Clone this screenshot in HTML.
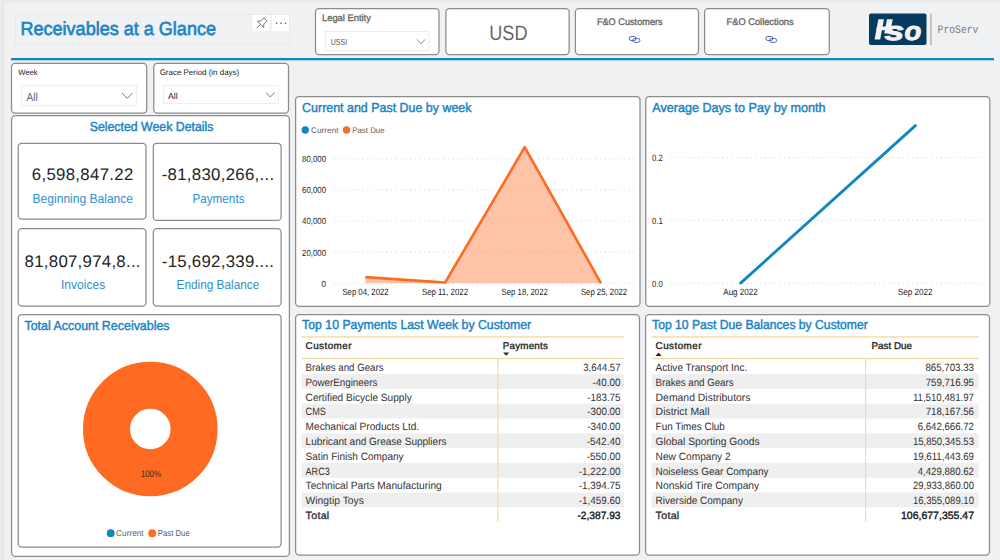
<!DOCTYPE html>
<html><head><meta charset="utf-8"><style>
html,body{margin:0;padding:0;width:1000px;height:560px;overflow:hidden;background:#F0F1F3;}
svg{display:block;}
</style></head><body>
<svg width="1000" height="560" viewBox="0 0 1000 560" text-rendering="geometricPrecision">
<rect x="0" y="0" width="1000" height="560" rx="0" fill="#F0F1F3" stroke="none" stroke-width="1" />
<rect x="0" y="0" width="1000" height="2" rx="0" fill="#E9E9E9" stroke="none" stroke-width="1" />
<rect x="0" y="0" width="2" height="560" rx="0" fill="#EDEDED" stroke="none" stroke-width="1" />
<rect x="2" y="0" width="2" height="560" rx="0" fill="#E6E6E6" stroke="none" stroke-width="1" />
<rect x="15.5" y="14.5" width="274.0" height="30.0" rx="0" fill="#F0F1F3" stroke="#E8E9EB" stroke-width="1" />
<text x="20.50" y="34.80" font-family="Liberation Sans" font-weight="normal" font-style="normal" font-size="18.84" fill="#1B84C5" stroke="#1B84C5" stroke-width="0.65" textLength="195.49" lengthAdjust="spacingAndGlyphs">Receivables at a Glance</text>
<rect x="252.5" y="15" width="17.0" height="16" rx="0" fill="#fff" stroke="none" stroke-width="1" />
<rect x="272" y="15" width="17" height="16" rx="0" fill="#fff" stroke="none" stroke-width="1" />
<g transform="translate(260.6,24.2) rotate(45) scale(0.95)" stroke="#707070" stroke-width="0.95" fill="none" stroke-linejoin="round"><path d="M-2.3,-7.2 L2.3,-7.2 L2.3,-2.6 L4.6,0.2 L-4.6,0.2 L-2.3,-2.6 Z"/><path d="M0,0.2 L0,6.2"/></g>
<circle cx="276.5" cy="23.3" r="0.8" fill="#555"/>
<circle cx="281" cy="23.3" r="0.8" fill="#555"/>
<circle cx="285.4" cy="23.3" r="0.8" fill="#555"/>
<rect x="315.5" y="8.6" width="123.5" height="46.0" rx="3.5" fill="#fff" stroke="#8C8C8C" stroke-width="1.25" />
<rect x="445.9" y="8.6" width="123.20000000000005" height="46.0" rx="3.5" fill="#fff" stroke="#8C8C8C" stroke-width="1.25" />
<rect x="575.4" y="8.6" width="123.10000000000002" height="46.0" rx="3.5" fill="#fff" stroke="#8C8C8C" stroke-width="1.25" />
<rect x="704.6" y="8.6" width="124.69999999999993" height="46.0" rx="3.5" fill="#fff" stroke="#8C8C8C" stroke-width="1.25" />
<text x="322.00" y="21.40" font-family="Liberation Sans" font-weight="normal" font-style="normal" font-size="9.57" fill="#666" stroke="#666" stroke-width="0.33" textLength="48.91" lengthAdjust="spacingAndGlyphs">Legal Entity</text>
<rect x="325.5" y="31.5" width="103.5" height="19.0" rx="0" fill="#fff" stroke="#ECECEC" stroke-width="1" />
<text x="330.70" y="45.20" font-family="Liberation Sans" font-weight="normal" font-style="normal" font-size="8.70" fill="#555" textLength="16.39" lengthAdjust="spacingAndGlyphs">USSI</text>
<path d="M417,39.5 L421,43.8 L425,39.5" fill="none" stroke="#777" stroke-width="0.9"/>
<text x="489.30" y="39.70" font-family="Liberation Sans" font-weight="normal" font-style="normal" font-size="20.87" fill="#666" textLength="38.23" lengthAdjust="spacingAndGlyphs">USD</text>
<text x="596.90" y="24.90" font-family="Liberation Sans" font-weight="normal" font-style="normal" font-size="9.57" fill="#666" stroke="#666" stroke-width="0.33" textLength="65.78" lengthAdjust="spacingAndGlyphs">F&amp;O Customers</text>
<text x="726.60" y="24.90" font-family="Liberation Sans" font-weight="normal" font-style="normal" font-size="9.57" fill="#666" stroke="#666" stroke-width="0.33" textLength="67.00" lengthAdjust="spacingAndGlyphs">F&amp;O Collections</text>
<g fill="none" stroke="#5A64B8" stroke-width="1"><rect x="629.1" y="36.5" width="7" height="4" rx="2"/><rect x="632.9" y="38.4" width="7" height="4" rx="2"/></g>
<g fill="none" stroke="#5A64B8" stroke-width="1"><rect x="765.8" y="36.5" width="7" height="4" rx="2"/><rect x="769.5999999999999" y="38.4" width="7" height="4" rx="2"/></g>
<rect x="869" y="13.5" width="57.5" height="31.5" rx="2" fill="#063B5F" stroke="none" stroke-width="1" />
<g transform="translate(874.6,39.4) skewX(-10.5)" fill="#F2F3F4"><rect x="0" y="-20.2" width="5.6" height="20.2"/><rect x="8.6" y="-20.2" width="5.8" height="14.2"/><rect x="0" y="-13.0" width="14" height="3.9"/></g>
<text x="884.60" y="39.60" font-family="Liberation Sans" font-weight="bold" font-style="italic" font-size="26.00" fill="#F2F3F4" stroke="#F2F3F4" stroke-width="0.9" textLength="19.64" lengthAdjust="spacingAndGlyphs">s</text>
<text x="904.40" y="39.60" font-family="Liberation Sans" font-weight="bold" font-style="italic" font-size="26.00" fill="#F2F3F4" stroke="#F2F3F4" stroke-width="0.9" textLength="16.82" lengthAdjust="spacingAndGlyphs">o</text>
<rect x="930.5" y="13.5" width="1.0" height="31.5" rx="0" fill="#9A9A9A" stroke="none" stroke-width="1" />
<text x="937.60" y="32.80" font-family="Liberation Mono" font-weight="normal" font-style="normal" font-size="11.59" fill="#7A7A7A" textLength="40.81" lengthAdjust="spacingAndGlyphs">ProServ</text>
<rect x="11" y="58" width="983" height="2.299999999999997" rx="0" fill="#1584C6" stroke="none" stroke-width="1" />
<rect x="11.5" y="63.4" width="135.2" height="49.699999999999996" rx="3.5" fill="#fff" stroke="#8C8C8C" stroke-width="1.25" />
<rect x="153.8" y="63.4" width="134.7" height="49.699999999999996" rx="3.5" fill="#fff" stroke="#8C8C8C" stroke-width="1.25" />
<text x="18.20" y="74.80" font-family="Liberation Sans" font-weight="normal" font-style="normal" font-size="8.12" fill="#252423" textLength="19.45" lengthAdjust="spacingAndGlyphs">Week</text>
<rect x="21.5" y="85.5" width="115.0" height="20.0" rx="0" fill="#fff" stroke="#EEEEEE" stroke-width="1" />
<text x="26.40" y="100.70" font-family="Liberation Sans" font-weight="normal" font-style="normal" font-size="11.59" fill="#666" textLength="11.31" lengthAdjust="spacingAndGlyphs">All</text>
<path d="M122,93 L127.2,98.4 L132.4,93" fill="none" stroke="#777" stroke-width="1"/>
<text x="159.70" y="74.80" font-family="Liberation Sans" font-weight="normal" font-style="normal" font-size="8.12" fill="#252423" textLength="79.49" lengthAdjust="spacingAndGlyphs">Grace Period (in days)</text>
<rect x="163.5" y="85.5" width="115.0" height="18.0" rx="0" fill="#fff" stroke="#EEEEEE" stroke-width="1" />
<text x="168.00" y="98.80" font-family="Liberation Sans" font-weight="normal" font-style="normal" font-size="8.70" fill="#252423" textLength="9.74" lengthAdjust="spacing">All</text>
<path d="M266,92.6 L270.3,97 L274.6,92.6" fill="none" stroke="#777" stroke-width="1"/>
<rect x="11.6" y="115.6" width="277.79999999999995" height="440.79999999999995" rx="4" fill="#fff" stroke="#8C8C8C" stroke-width="1.25" />
<text x="89.70" y="130.70" font-family="Liberation Sans" font-weight="normal" font-style="normal" font-size="13.04" fill="#1B84C5" stroke="#1B84C5" stroke-width="0.45" textLength="123.73" lengthAdjust="spacingAndGlyphs">Selected Week Details</text>
<rect x="18.25" y="143.25" width="127.75" height="75.85" rx="3.5" fill="#fff" stroke="#8C8C8C" stroke-width="1.25" />
<rect x="153.3" y="143.25" width="127.80000000000001" height="77.15" rx="3.5" fill="#fff" stroke="#8C8C8C" stroke-width="1.25" />
<rect x="18.25" y="228.6" width="127.75" height="77.4" rx="3.5" fill="#fff" stroke="#8C8C8C" stroke-width="1.25" />
<rect x="153.3" y="228.6" width="127.80000000000001" height="77.4" rx="3.5" fill="#fff" stroke="#8C8C8C" stroke-width="1.25" />
<text x="31.80" y="179.60" font-family="Liberation Sans" font-weight="normal" font-style="normal" font-size="16.81" fill="#252423" textLength="101.46" lengthAdjust="spacing">6,598,847.22</text>
<text x="32.60" y="203.20" font-family="Liberation Sans" font-weight="normal" font-style="normal" font-size="13.04" fill="#3090CC" textLength="100.40" lengthAdjust="spacingAndGlyphs">Beginning Balance</text>
<text x="161.70" y="180.20" font-family="Liberation Sans" font-weight="normal" font-style="normal" font-size="16.81" fill="#252423" textLength="112.35" lengthAdjust="spacing">-81,830,266,...</text>
<text x="192.40" y="202.60" font-family="Liberation Sans" font-weight="normal" font-style="normal" font-size="13.04" fill="#3090CC" textLength="52.12" lengthAdjust="spacingAndGlyphs">Payments</text>
<text x="24.60" y="266.80" font-family="Liberation Sans" font-weight="normal" font-style="normal" font-size="16.81" fill="#252423" textLength="115.89" lengthAdjust="spacing">81,807,974,8...</text>
<text x="61.00" y="289.20" font-family="Liberation Sans" font-weight="normal" font-style="normal" font-size="13.04" fill="#3090CC" textLength="44.18" lengthAdjust="spacingAndGlyphs">Invoices</text>
<text x="161.80" y="266.80" font-family="Liberation Sans" font-weight="normal" font-style="normal" font-size="16.81" fill="#252423" textLength="112.24" lengthAdjust="spacing">-15,692,339....</text>
<text x="176.60" y="289.20" font-family="Liberation Sans" font-weight="normal" font-style="normal" font-size="13.04" fill="#3090CC" textLength="82.61" lengthAdjust="spacingAndGlyphs">Ending Balance</text>
<rect x="18.25" y="314.5" width="262.85" height="232.5" rx="3.5" fill="#fff" stroke="#8C8C8C" stroke-width="1.25" />
<text x="24.50" y="330.00" font-family="Liberation Sans" font-weight="normal" font-style="normal" font-size="13.04" fill="#1B84C5" stroke="#1B84C5" stroke-width="0.45" textLength="145.08" lengthAdjust="spacingAndGlyphs">Total Account Receivables</text>
<circle cx="150.3" cy="429" r="43.8" fill="none" stroke="#FF6A22" stroke-width="47"/>
<text x="140.90" y="477.10" font-family="Liberation Sans" font-weight="normal" font-style="normal" font-size="9.42" fill="#3a2a20" textLength="19.98" lengthAdjust="spacingAndGlyphs">100%</text>
<circle cx="110.7" cy="533.2" r="3.9" fill="#1184C3"/>
<circle cx="152.2" cy="533.2" r="3.9" fill="#FF6A22"/>
<text x="116.10" y="536.00" font-family="Liberation Sans" font-weight="normal" font-style="normal" font-size="8.70" fill="#605E5C" textLength="27.50" lengthAdjust="spacingAndGlyphs">Current</text>
<text x="157.70" y="536.00" font-family="Liberation Sans" font-weight="normal" font-style="normal" font-size="8.70" fill="#605E5C" textLength="32.09" lengthAdjust="spacingAndGlyphs">Past Due</text>
<rect x="295.6" y="96.5" width="344.4" height="209.8" rx="3.5" fill="#fff" stroke="#8C8C8C" stroke-width="1.25" />
<text x="302.10" y="111.50" font-family="Liberation Sans" font-weight="normal" font-style="normal" font-size="13.04" fill="#1B84C5" stroke="#1B84C5" stroke-width="0.45" textLength="169.42" lengthAdjust="spacingAndGlyphs">Current and Past Due by week</text>
<circle cx="305.3" cy="130" r="3.7" fill="#1184C3"/>
<circle cx="346.5" cy="130" r="3.7" fill="#FF6A22"/>
<text x="311.00" y="132.90" font-family="Liberation Sans" font-weight="normal" font-style="normal" font-size="8.12" fill="#605E5C" textLength="27.57" lengthAdjust="spacing">Current</text>
<text x="352.20" y="132.90" font-family="Liberation Sans" font-weight="normal" font-style="normal" font-size="8.12" fill="#605E5C" textLength="32.39" lengthAdjust="spacingAndGlyphs">Past Due</text>
<line x1="334" y1="283.3" x2="635" y2="283.3" stroke="#D6D6D6" stroke-width="1" stroke-dasharray="1 3.75"/>
<text x="321.50" y="286.60" font-family="Liberation Sans" font-weight="normal" font-style="normal" font-size="8.99" fill="#252423" textLength="4.51" lengthAdjust="spacingAndGlyphs">0</text>
<line x1="334" y1="252.2" x2="635" y2="252.2" stroke="#D6D6D6" stroke-width="1" stroke-dasharray="1 3.75"/>
<text x="302.10" y="255.50" font-family="Liberation Sans" font-weight="normal" font-style="normal" font-size="8.99" fill="#252423" textLength="23.89" lengthAdjust="spacingAndGlyphs">20,000</text>
<line x1="334" y1="221.1" x2="635" y2="221.1" stroke="#D6D6D6" stroke-width="1" stroke-dasharray="1 3.75"/>
<text x="302.10" y="224.40" font-family="Liberation Sans" font-weight="normal" font-style="normal" font-size="8.99" fill="#252423" textLength="23.89" lengthAdjust="spacingAndGlyphs">40,000</text>
<line x1="334" y1="190.0" x2="635" y2="190.0" stroke="#D6D6D6" stroke-width="1" stroke-dasharray="1 3.75"/>
<text x="302.10" y="193.30" font-family="Liberation Sans" font-weight="normal" font-style="normal" font-size="8.99" fill="#252423" textLength="23.89" lengthAdjust="spacingAndGlyphs">60,000</text>
<line x1="334" y1="158.9" x2="635" y2="158.9" stroke="#D6D6D6" stroke-width="1" stroke-dasharray="1 3.75"/>
<text x="302.10" y="162.20" font-family="Liberation Sans" font-weight="normal" font-style="normal" font-size="8.99" fill="#252423" textLength="23.89" lengthAdjust="spacingAndGlyphs">80,000</text>
<defs><clipPath id="c1"><rect x="300" y="100" width="340" height="183.8"/></clipPath></defs>
<polygon points="365.3,283.3 365.3,277.1 445.1,282.6 524.7,147.2 601,283.3 601,283.3" fill="#FF6A22" fill-opacity="0.4" clip-path="url(#c1)"/>
<polyline points="365.3,277.1 445.1,282.6 524.7,147.2 601,283.3" fill="none" stroke="#FF6A22" stroke-width="2.6" stroke-linejoin="round" clip-path="url(#c1)"/>
<text x="342.40" y="294.60" font-family="Liberation Sans" font-weight="normal" font-style="normal" font-size="9.13" fill="#252423" textLength="46.20" lengthAdjust="spacingAndGlyphs">Sep 04, 2022</text>
<text x="421.90" y="294.60" font-family="Liberation Sans" font-weight="normal" font-style="normal" font-size="9.13" fill="#252423" textLength="46.20" lengthAdjust="spacingAndGlyphs">Sep 11, 2022</text>
<text x="501.60" y="294.60" font-family="Liberation Sans" font-weight="normal" font-style="normal" font-size="9.13" fill="#252423" textLength="46.20" lengthAdjust="spacingAndGlyphs">Sep 18, 2022</text>
<text x="580.90" y="294.60" font-family="Liberation Sans" font-weight="normal" font-style="normal" font-size="9.13" fill="#252423" textLength="46.20" lengthAdjust="spacingAndGlyphs">Sep 25, 2022</text>
<rect x="645.8" y="96.5" width="344.0" height="209.8" rx="3.5" fill="#fff" stroke="#8C8C8C" stroke-width="1.25" />
<text x="652.30" y="111.60" font-family="Liberation Sans" font-weight="normal" font-style="normal" font-size="13.04" fill="#1B84C5" stroke="#1B84C5" stroke-width="0.45" textLength="173.22" lengthAdjust="spacingAndGlyphs">Average Days to Pay by month</text>
<line x1="670" y1="157.6" x2="985" y2="157.6" stroke="#D6D6D6" stroke-width="1" stroke-dasharray="1 3.75"/>
<text x="652.10" y="160.70" font-family="Liberation Sans" font-weight="normal" font-style="normal" font-size="9.13" fill="#252423" textLength="10.70" lengthAdjust="spacingAndGlyphs">0.2</text>
<line x1="670" y1="220.5" x2="985" y2="220.5" stroke="#D6D6D6" stroke-width="1" stroke-dasharray="1 3.75"/>
<text x="652.10" y="223.60" font-family="Liberation Sans" font-weight="normal" font-style="normal" font-size="9.13" fill="#252423" textLength="10.70" lengthAdjust="spacingAndGlyphs">0.1</text>
<line x1="670" y1="283.4" x2="985" y2="283.4" stroke="#D6D6D6" stroke-width="1" stroke-dasharray="1 3.75"/>
<text x="652.10" y="286.50" font-family="Liberation Sans" font-weight="normal" font-style="normal" font-size="9.13" fill="#252423" textLength="10.70" lengthAdjust="spacingAndGlyphs">0.0</text>
<line x1="740.6" y1="283.1" x2="915.4" y2="125.6" stroke="#1184C3" stroke-width="2.8" stroke-linecap="round"/>
<text x="723.25" y="294.70" font-family="Liberation Sans" font-weight="normal" font-style="normal" font-size="9.13" fill="#252423" textLength="34.52" lengthAdjust="spacingAndGlyphs">Aug 2022</text>
<text x="897.95" y="294.70" font-family="Liberation Sans" font-weight="normal" font-style="normal" font-size="9.13" fill="#252423" textLength="34.52" lengthAdjust="spacingAndGlyphs">Sep 2022</text>
<rect x="295.6" y="314.6" width="343.9" height="240.5" rx="3.5" fill="#fff" stroke="#8C8C8C" stroke-width="1.25" />
<text x="302.10" y="329.20" font-family="Liberation Sans" font-weight="normal" font-style="normal" font-size="13.04" fill="#1B84C5" stroke="#1B84C5" stroke-width="0.45" textLength="229.12" lengthAdjust="spacingAndGlyphs">Top 10 Payments Last Week by Customer</text>
<rect x="301.5" y="336.2" width="322.70000000000005" height="1.400000000000034" rx="0" fill="#F3DCA5" stroke="none" stroke-width="1" />
<rect x="301.5" y="357.8" width="322.70000000000005" height="1.3999999999999773" rx="0" fill="#F3DCA5" stroke="none" stroke-width="1" />
<text x="305.60" y="349.10" font-family="Liberation Sans" font-weight="normal" font-style="normal" font-size="9.86" fill="#252423" stroke="#252423" stroke-width="0.34" textLength="45.89" lengthAdjust="spacing">Customer</text>
<text x="502.70" y="349.10" font-family="Liberation Sans" font-weight="normal" font-style="normal" font-size="9.86" fill="#252423" stroke="#252423" stroke-width="0.34" textLength="45.18" lengthAdjust="spacing">Payments</text>
<text x="305.60" y="370.90" font-family="Liberation Sans" font-weight="normal" font-style="normal" font-size="10.58" fill="#333231" textLength="77.90" lengthAdjust="spacingAndGlyphs">Brakes and Gears</text>
<text x="583.30" y="370.90" font-family="Liberation Sans" font-weight="normal" font-style="normal" font-size="10.58" fill="#333231" textLength="37.18" lengthAdjust="spacingAndGlyphs">3,644.57</text>
<rect x="301.5" y="374.1" width="322.70000000000005" height="14.800000000000011" rx="0" fill="#EFEFEF" stroke="none" stroke-width="1" />
<text x="305.60" y="385.70" font-family="Liberation Sans" font-weight="normal" font-style="normal" font-size="10.58" fill="#333231" textLength="71.68" lengthAdjust="spacingAndGlyphs">PowerEngineers</text>
<text x="592.40" y="385.70" font-family="Liberation Sans" font-weight="normal" font-style="normal" font-size="10.58" fill="#333231" textLength="28.11" lengthAdjust="spacingAndGlyphs">-40.00</text>
<text x="305.60" y="400.50" font-family="Liberation Sans" font-weight="normal" font-style="normal" font-size="10.58" fill="#333231" textLength="106.10" lengthAdjust="spacingAndGlyphs">Certified Bicycle Supply</text>
<text x="587.30" y="400.50" font-family="Liberation Sans" font-weight="normal" font-style="normal" font-size="10.58" fill="#333231" textLength="33.22" lengthAdjust="spacingAndGlyphs">-183.75</text>
<rect x="301.5" y="403.70000000000005" width="322.70000000000005" height="14.800000000000011" rx="0" fill="#EFEFEF" stroke="none" stroke-width="1" />
<text x="305.60" y="415.30" font-family="Liberation Sans" font-weight="normal" font-style="normal" font-size="10.58" fill="#333231" textLength="20.32" lengthAdjust="spacingAndGlyphs">CMS</text>
<text x="587.30" y="415.30" font-family="Liberation Sans" font-weight="normal" font-style="normal" font-size="10.58" fill="#333231" textLength="33.22" lengthAdjust="spacingAndGlyphs">-300.00</text>
<text x="305.60" y="430.10" font-family="Liberation Sans" font-weight="normal" font-style="normal" font-size="10.58" fill="#333231" textLength="113.58" lengthAdjust="spacingAndGlyphs">Mechanical Products Ltd.</text>
<text x="587.30" y="430.10" font-family="Liberation Sans" font-weight="normal" font-style="normal" font-size="10.58" fill="#333231" textLength="33.22" lengthAdjust="spacingAndGlyphs">-340.00</text>
<rect x="301.5" y="433.3" width="322.70000000000005" height="14.800000000000011" rx="0" fill="#EFEFEF" stroke="none" stroke-width="1" />
<text x="305.60" y="444.90" font-family="Liberation Sans" font-weight="normal" font-style="normal" font-size="10.58" fill="#333231" textLength="140.89" lengthAdjust="spacingAndGlyphs">Lubricant and Grease Suppliers</text>
<text x="586.70" y="444.90" font-family="Liberation Sans" font-weight="normal" font-style="normal" font-size="10.58" fill="#333231" textLength="33.82" lengthAdjust="spacingAndGlyphs">-542.40</text>
<text x="305.60" y="459.70" font-family="Liberation Sans" font-weight="normal" font-style="normal" font-size="10.58" fill="#333231" textLength="97.97" lengthAdjust="spacingAndGlyphs">Satin Finish Company</text>
<text x="586.70" y="459.70" font-family="Liberation Sans" font-weight="normal" font-style="normal" font-size="10.58" fill="#333231" textLength="33.82" lengthAdjust="spacingAndGlyphs">-550.00</text>
<rect x="301.5" y="462.90000000000003" width="322.70000000000005" height="14.800000000000011" rx="0" fill="#EFEFEF" stroke="none" stroke-width="1" />
<text x="305.60" y="474.50" font-family="Liberation Sans" font-weight="normal" font-style="normal" font-size="10.58" fill="#333231" textLength="24.08" lengthAdjust="spacingAndGlyphs">ARC3</text>
<text x="578.70" y="474.50" font-family="Liberation Sans" font-weight="normal" font-style="normal" font-size="10.58" fill="#333231" textLength="41.81" lengthAdjust="spacingAndGlyphs">-1,222.00</text>
<text x="305.60" y="489.30" font-family="Liberation Sans" font-weight="normal" font-style="normal" font-size="10.58" fill="#333231" textLength="136.11" lengthAdjust="spacingAndGlyphs">Technical Parts Manufacturing</text>
<text x="578.70" y="489.30" font-family="Liberation Sans" font-weight="normal" font-style="normal" font-size="10.58" fill="#333231" textLength="41.81" lengthAdjust="spacingAndGlyphs">-1,394.75</text>
<rect x="301.5" y="492.5" width="322.70000000000005" height="14.800000000000011" rx="0" fill="#EFEFEF" stroke="none" stroke-width="1" />
<text x="305.60" y="504.10" font-family="Liberation Sans" font-weight="normal" font-style="normal" font-size="10.58" fill="#333231" textLength="58.30" lengthAdjust="spacingAndGlyphs">Wingtip Toys</text>
<text x="578.70" y="504.10" font-family="Liberation Sans" font-weight="normal" font-style="normal" font-size="10.58" fill="#333231" textLength="41.81" lengthAdjust="spacingAndGlyphs">-1,459.60</text>
<text x="305.60" y="518.90" font-family="Liberation Sans" font-weight="normal" font-style="normal" font-size="10.58" fill="#333231" stroke="#333231" stroke-width="0.37" textLength="23.57" lengthAdjust="spacing">Total</text>
<text x="577.40" y="518.90" font-family="Liberation Sans" font-weight="normal" font-style="normal" font-size="10.58" fill="#151515" stroke="#151515" stroke-width="0.37" textLength="43.11" lengthAdjust="spacingAndGlyphs">-2,387.93</text>
<rect x="497.29999999999995" y="359.2" width="1.2000000000000455" height="162.40000000000003" rx="0" fill="#F3DCA5" stroke="none" stroke-width="1" />
<path d="M503.2,352.5 L509.2,352.5 L506.2,355.7 Z" fill="#252423"/>
<rect x="645.6" y="314.6" width="343.9" height="240.5" rx="3.5" fill="#fff" stroke="#8C8C8C" stroke-width="1.25" />
<text x="652.10" y="329.20" font-family="Liberation Sans" font-weight="normal" font-style="normal" font-size="13.04" fill="#1B84C5" stroke="#1B84C5" stroke-width="0.45" textLength="215.72" lengthAdjust="spacingAndGlyphs">Top 10 Past Due Balances by Customer</text>
<rect x="651.5" y="336.2" width="327.1" height="1.400000000000034" rx="0" fill="#F3DCA5" stroke="none" stroke-width="1" />
<rect x="651.5" y="357.8" width="327.1" height="1.3999999999999773" rx="0" fill="#F3DCA5" stroke="none" stroke-width="1" />
<text x="655.60" y="349.10" font-family="Liberation Sans" font-weight="normal" font-style="normal" font-size="9.86" fill="#252423" stroke="#252423" stroke-width="0.34" textLength="45.89" lengthAdjust="spacing">Customer</text>
<text x="871.50" y="349.10" font-family="Liberation Sans" font-weight="normal" font-style="normal" font-size="9.86" fill="#252423" stroke="#252423" stroke-width="0.34" textLength="40.48" lengthAdjust="spacingAndGlyphs">Past Due</text>
<text x="655.60" y="370.90" font-family="Liberation Sans" font-weight="normal" font-style="normal" font-size="10.58" fill="#333231" textLength="91.70" lengthAdjust="spacingAndGlyphs">Active Transport Inc.</text>
<text x="925.40" y="370.90" font-family="Liberation Sans" font-weight="normal" font-style="normal" font-size="10.58" fill="#333231" textLength="48.60" lengthAdjust="spacingAndGlyphs">865,703.33</text>
<rect x="651.5" y="374.1" width="327.1" height="14.800000000000011" rx="0" fill="#EFEFEF" stroke="none" stroke-width="1" />
<text x="655.60" y="385.70" font-family="Liberation Sans" font-weight="normal" font-style="normal" font-size="10.58" fill="#333231" textLength="77.90" lengthAdjust="spacingAndGlyphs">Brakes and Gears</text>
<text x="925.70" y="385.70" font-family="Liberation Sans" font-weight="normal" font-style="normal" font-size="10.58" fill="#333231" textLength="48.30" lengthAdjust="spacingAndGlyphs">759,716.95</text>
<text x="655.60" y="400.50" font-family="Liberation Sans" font-weight="normal" font-style="normal" font-size="10.58" fill="#333231" textLength="94.90" lengthAdjust="spacingAndGlyphs">Demand Distributors</text>
<text x="912.90" y="400.50" font-family="Liberation Sans" font-weight="normal" font-style="normal" font-size="10.58" fill="#333231" textLength="61.11" lengthAdjust="spacingAndGlyphs">11,510,481.97</text>
<rect x="651.5" y="403.70000000000005" width="327.1" height="14.800000000000011" rx="0" fill="#EFEFEF" stroke="none" stroke-width="1" />
<text x="655.60" y="415.30" font-family="Liberation Sans" font-weight="normal" font-style="normal" font-size="10.58" fill="#333231" textLength="53.92" lengthAdjust="spacingAndGlyphs">District Mall</text>
<text x="925.70" y="415.30" font-family="Liberation Sans" font-weight="normal" font-style="normal" font-size="10.58" fill="#333231" textLength="48.30" lengthAdjust="spacingAndGlyphs">718,167.56</text>
<text x="655.60" y="430.10" font-family="Liberation Sans" font-weight="normal" font-style="normal" font-size="10.58" fill="#333231" textLength="69.28" lengthAdjust="spacingAndGlyphs">Fun Times Club</text>
<text x="917.70" y="430.10" font-family="Liberation Sans" font-weight="normal" font-style="normal" font-size="10.58" fill="#333231" textLength="56.29" lengthAdjust="spacingAndGlyphs">6,642,666.72</text>
<rect x="651.5" y="433.3" width="327.1" height="14.800000000000011" rx="0" fill="#EFEFEF" stroke="none" stroke-width="1" />
<text x="655.60" y="444.90" font-family="Liberation Sans" font-weight="normal" font-style="normal" font-size="10.58" fill="#333231" textLength="104.02" lengthAdjust="spacingAndGlyphs">Global Sporting Goods</text>
<text x="912.90" y="444.90" font-family="Liberation Sans" font-weight="normal" font-style="normal" font-size="10.58" fill="#333231" textLength="61.10" lengthAdjust="spacingAndGlyphs">15,850,345.53</text>
<text x="655.60" y="459.70" font-family="Liberation Sans" font-weight="normal" font-style="normal" font-size="10.58" fill="#333231" textLength="75.02" lengthAdjust="spacingAndGlyphs">New Company 2</text>
<text x="912.90" y="459.70" font-family="Liberation Sans" font-weight="normal" font-style="normal" font-size="10.58" fill="#333231" textLength="61.11" lengthAdjust="spacingAndGlyphs">19,611,443.69</text>
<rect x="651.5" y="462.90000000000003" width="327.1" height="14.800000000000011" rx="0" fill="#EFEFEF" stroke="none" stroke-width="1" />
<text x="655.60" y="474.50" font-family="Liberation Sans" font-weight="normal" font-style="normal" font-size="10.58" fill="#333231" textLength="112.99" lengthAdjust="spacingAndGlyphs">Noiseless Gear Company</text>
<text x="917.70" y="474.50" font-family="Liberation Sans" font-weight="normal" font-style="normal" font-size="10.58" fill="#333231" textLength="56.29" lengthAdjust="spacingAndGlyphs">4,429,880.62</text>
<text x="655.60" y="489.30" font-family="Liberation Sans" font-weight="normal" font-style="normal" font-size="10.58" fill="#333231" textLength="103.61" lengthAdjust="spacingAndGlyphs">Nonskid Tire Company</text>
<text x="912.90" y="489.30" font-family="Liberation Sans" font-weight="normal" font-style="normal" font-size="10.58" fill="#333231" textLength="61.10" lengthAdjust="spacingAndGlyphs">29,933,860.00</text>
<rect x="651.5" y="492.5" width="327.1" height="14.800000000000011" rx="0" fill="#EFEFEF" stroke="none" stroke-width="1" />
<text x="655.60" y="504.10" font-family="Liberation Sans" font-weight="normal" font-style="normal" font-size="10.58" fill="#333231" textLength="87.31" lengthAdjust="spacingAndGlyphs">Riverside Company</text>
<text x="912.90" y="504.10" font-family="Liberation Sans" font-weight="normal" font-style="normal" font-size="10.58" fill="#333231" textLength="61.10" lengthAdjust="spacingAndGlyphs">16,355,089.10</text>
<text x="655.60" y="518.90" font-family="Liberation Sans" font-weight="normal" font-style="normal" font-size="10.58" fill="#333231" stroke="#333231" stroke-width="0.37" textLength="23.57" lengthAdjust="spacing">Total</text>
<text x="901.00" y="518.90" font-family="Liberation Sans" font-weight="normal" font-style="normal" font-size="10.58" fill="#151515" stroke="#151515" stroke-width="0.37" textLength="73.01" lengthAdjust="spacingAndGlyphs">106,677,355.47</text>
<rect x="865.0" y="359.2" width="1.2000000000000455" height="162.40000000000003" rx="0" fill="#F3DCA5" stroke="none" stroke-width="1" />
<path d="M655.6,355.9 L661.6,355.9 L658.6,352.6 Z" fill="#252423"/>
</svg>
</body></html>
